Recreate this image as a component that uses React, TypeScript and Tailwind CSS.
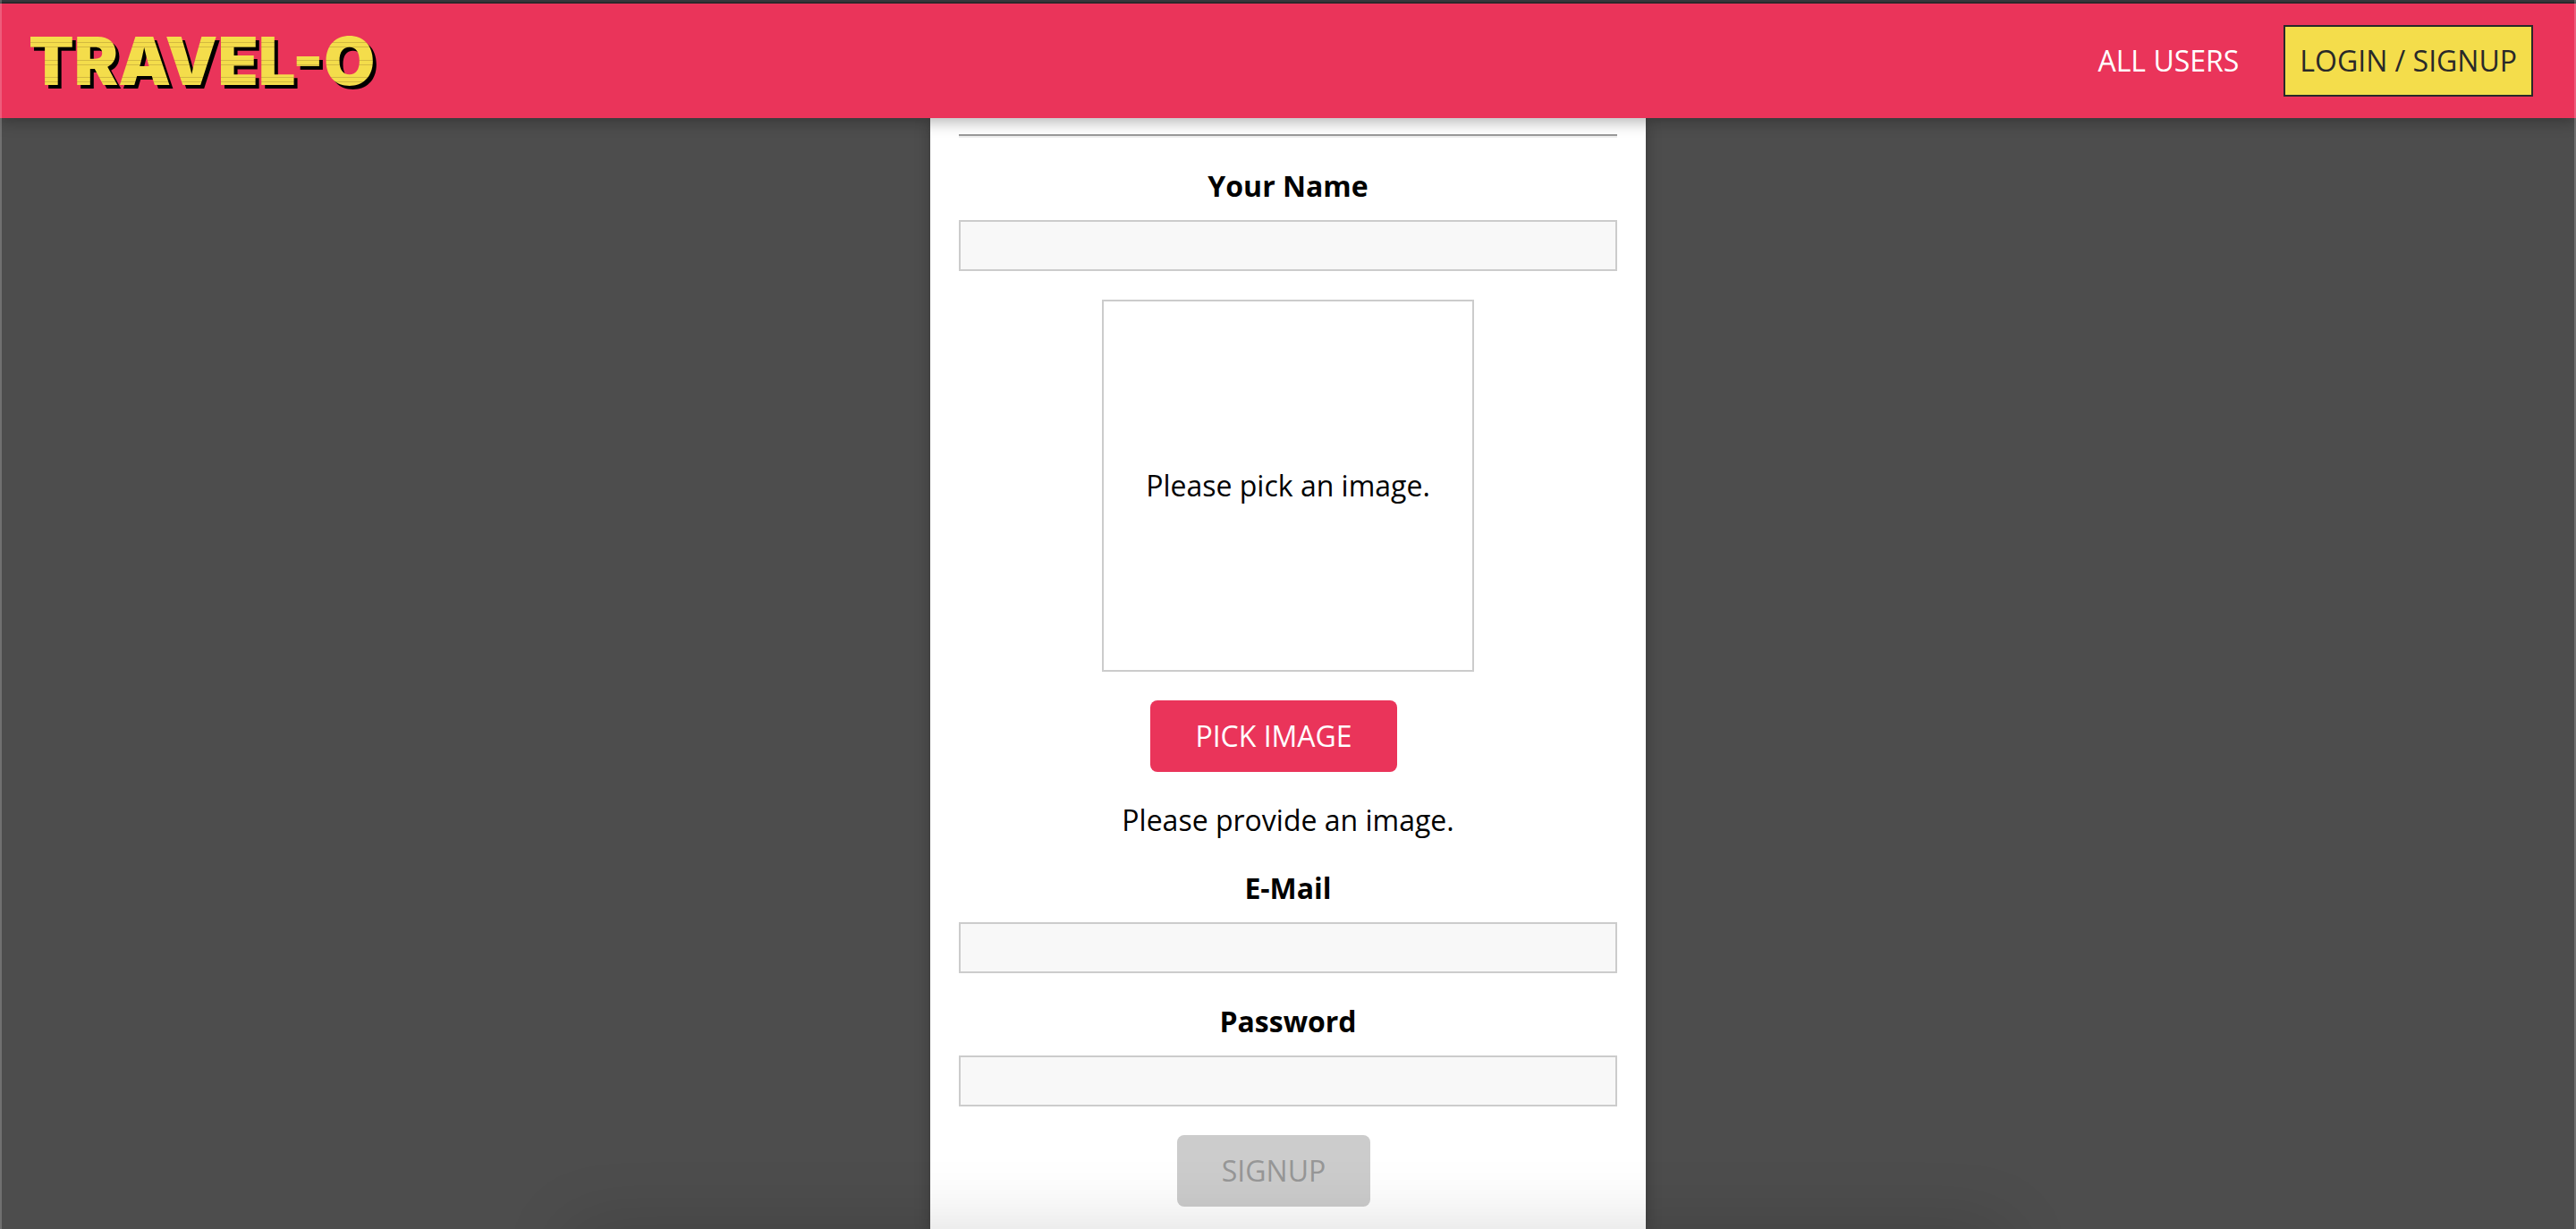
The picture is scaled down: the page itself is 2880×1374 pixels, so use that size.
import type { ReactNode } from "react";

type FieldProps = { id: string; label: string; type: string };

function Field({ id, label, type }: FieldProps) {
  return (
    <div className="flex w-full flex-col gap-4">
      <label htmlFor={id} className="text-center font-bold">
        {label}
      </label>
      <input
        id={id}
        type={type}
        className="h-[57px] w-full border-2 border-[#cccccc] bg-[#f8f8f8] px-2 outline-none"
      />
    </div>
  );
}

type ActionProps = { children: ReactNode; type: "button" | "submit"; disabled?: boolean };

function Action({ children, type, disabled }: ActionProps) {
  return (
    <button
      type={type}
      disabled={disabled}
      className="mr-8 h-20 rounded-lg bg-[#ea345a] px-[50px] text-white disabled:bg-[#cccccc] disabled:text-[#979797]"
    >
      {children}
    </button>
  );
}

function Logo() {
  return (
    <h1 className="font-[Inter,sans-serif] text-[74px] leading-[92px] font-black drop-shadow-[4px_4px_0_#000000]">
      <a
        href="#home"
        className="block bg-[linear-gradient(to_bottom,#f4dd4b_25px,#d3b940_25px,#d3b940_26px,#f4dd4b_26px,#f4dd4b_30px,#d3b940_30px,#d3b940_31px,#f4dd4b_31px,#f4dd4b_45px,#d3b940_45px,#d3b940_46px,#f4dd4b_46px,#f4dd4b_50px,#d3b940_50px,#d3b940_51px,#f4dd4b_51px,#f4dd4b_64px,#d3b940_64px,#d3b940_65px,#f4dd4b_65px,#f4dd4b_69px,#d3b940_69px,#d3b940_70px,#f4dd4b_70px)] bg-clip-text text-transparent"
      >
        TRAVEL-O
      </a>
    </h1>
  );
}

export default function App() {
  return (
    <div className="flex min-h-screen flex-col bg-[#4d4d4d] font-['Open_Sans','Noto_Sans',sans-serif] text-[32px] leading-[44px] text-black">
      <header className="z-10 border-t-2 border-[#36383c] bg-[#ea345a] shadow-[0_4px_16px_rgba(0,0,0,0.3)]">
        <div className="flex h-[130px] items-center justify-between border-t-2 border-[#29292b] pr-12 pl-8">
          <Logo />
          <nav className="flex items-center gap-[50px]">
            <a href="#users" className="text-white">
              ALL USERS
            </a>
            <a
              href="#auth"
              className="border-2 border-[#292929] bg-[#f4dd4b] px-4 py-4 text-[#292929]"
            >
              LOGIN / SIGNUP
            </a>
          </nav>
        </div>
      </header>

      <main className="flex flex-1 flex-col items-center">
        <form className="flex w-full max-w-[800px] flex-1 flex-col items-center gap-8 bg-white px-8 pt-[18px] pb-6 shadow-[0_4px_16px_rgba(0,0,0,0.26)]">
          <hr className="h-1 w-full border-t-2 border-b-2 border-t-[#9a9a9a] border-b-[#eeeeee]" />
          <Field id="name" label="Your Name" type="text" />
          <div className="flex size-[416px] items-center justify-center border-2 border-[#cccccc]">
            <p>Please pick an image.</p>
          </div>
          <Action type="button">PICK IMAGE</Action>
          <p>Please provide an image.</p>
          <Field id="email" label="E-Mail" type="email" />
          <Field id="password" label="Password" type="password" />
          <Action type="submit" disabled>
            SIGNUP
          </Action>
        </form>
      </main>

      <div className="pointer-events-none fixed inset-x-0 bottom-0 z-20 flex h-28 justify-center overflow-hidden pt-28">
        <div className="h-40 w-[1600px] shrink-0 shadow-[0_0_80px_rgba(0,0,0,0.15)]" />
      </div>
      <div className="pointer-events-none fixed inset-0 z-20 border-x-2 border-white/20" />
    </div>
  );
}
